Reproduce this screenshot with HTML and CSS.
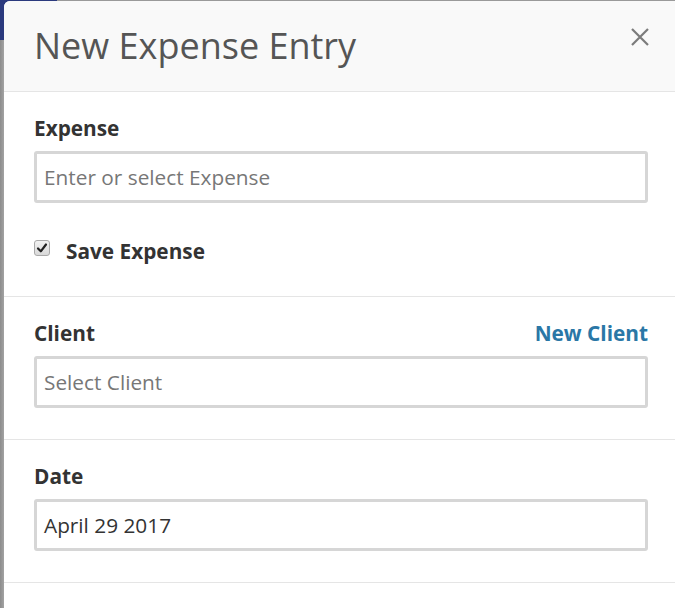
FILE: index.html
```html
<!DOCTYPE html>
<html>
<head>
<meta charset="utf-8">
<link rel="stylesheet" href="styles.css">
</head>
<body>
<div class="page">
  <div class="nav-block"></div>
</div>
<div class="modal">
  <div class="modal-header">
    <h1 class="modal-title">New Expense Entry</h1>
    <button class="close" aria-label="Close">
      <svg width="18" height="18" viewBox="0 0 18 18"><path d="M1 1 L17 17 M17 1 L1 17" stroke="#7b7b7b" stroke-width="2.2" fill="none"/></svg>
    </button>
  </div>
  <div class="section">
    <div class="label-row"><label class="label">Expense</label></div>
    <div class="input"><span class="placeholder">Enter or select Expense</span></div>
    <div class="check-row">
      <span class="checkbox">
        <svg width="12" height="12" viewBox="0 0 12 12"><path d="M2 6.5 L4.8 9.3 L10 2.5" stroke="#222" stroke-width="2.2" fill="none" stroke-linecap="round" stroke-linejoin="round"/></svg>
      </span>
      <span class="check-label">Save Expense</span>
    </div>
  </div>
  <div class="section">
    <div class="label-row"><label class="label">Client</label><a class="link">New Client</a></div>
    <div class="input"><span class="placeholder">Select Client</span></div>
  </div>
  <div class="section">
    <div class="label-row"><label class="label">Date</label></div>
    <div class="input"><span class="value">April 29 2017</span></div>
  </div>
</div>
</body>
</html>
```
FILE: styles.css
```css
html, body {
  margin: 0;
  padding: 0;
  height: 100%;
  overflow: hidden;
}
body {
  background: #9a9a9a;
  font-family: "Open Sans", "DejaVu Sans", sans-serif;
  position: relative;
}
.page {
  height: 100%;
  background: linear-gradient(to right, #8c8c8c 0, #a3a3a3 4px, #9a9a9a 4px);
}
.nav-block {
  width: 57px;
  height: 40px;
  background: #2b3a7e;
}
.modal {
  position: absolute;
  left: 4px;
  top: 1px;
  width: 674px;
  height: 700px;
  background: #fff;
  border-top-left-radius: 6px;
  overflow: hidden;
}
.modal-header {
  height: 91px;
  box-sizing: border-box;
  background: #f9f9f9;
  border-bottom: 1px solid #e5e5e5;
  display: flex;
  justify-content: space-between;
  align-items: flex-start;
  padding: 20px 29px 0 30px;
}
.modal-title {
  margin: 0;
  font-weight: 400;
  font-size: 36px;
  line-height: 49px;
  color: #555;
}
.close {
  border: 0;
  background: none;
  padding: 0;
  margin-top: 7px;
  width: 18px;
  height: 18px;
  display: block;
}
.close svg { display: block; }
.section {
  padding: 23px 30px 31px 30px;
  border-bottom: 1px solid #e5e5e5;
}
.label-row {
  display: flex;
  justify-content: space-between;
  align-items: baseline;
  margin-bottom: 9px;
}
.label, .link, .check-label {
  font-weight: 700;
  font-size: 20.8px;
  line-height: 27px;
  color: #333;
}
.link {
  color: #2a77a6;
}
.input {
  width: 614px;
  height: 52px;
  box-sizing: border-box;
  border: 3px solid #d6d6d6;
  border-radius: 3px;
  padding: 0 7px;
  display: flex;
  align-items: center;
  font-size: 20.8px;
  line-height: 27px;
}
.placeholder { color: #777; }
.value { color: #333; }
.check-row {
  display: flex;
  align-items: flex-start;
  margin-top: 35px;
  height: 27px;
}
.checkbox {
  width: 16px;
  height: 16px;
  box-sizing: border-box;
  margin-top: 2px;
  margin-right: 16px;
  border: 1px solid #a9a9a9;
  border-radius: 3px;
  background: linear-gradient(#f2f2f2, #d9d9d9);
  display: flex;
  align-items: center;
  justify-content: center;
}
.checkbox svg { display: block; }
```
